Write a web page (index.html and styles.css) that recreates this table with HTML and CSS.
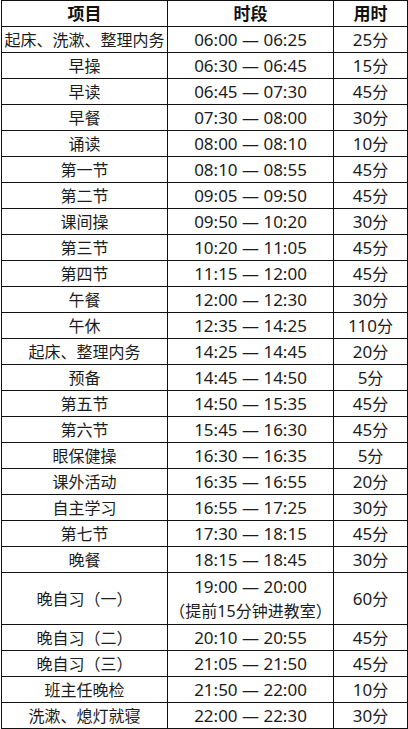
FILE: index.html
```html
<!DOCTYPE html>
<html lang="zh-CN">
<head>
<meta charset="utf-8">
<link rel="stylesheet" href="styles.css">
</head>
<body>
<table class="schedule">
  <colgroup><col class="c1"><col class="c2"><col class="c3"></colgroup>
  <thead>
    <tr><th>项目</th><th>时段</th><th>用时</th></tr>
  </thead>
  <tbody>
    <tr><td>起床、洗漱、整理内务</td><td class="num">06:00 — 06:25</td><td><span class="num">25</span>分</td></tr>
    <tr><td>早操</td><td class="num">06:30 — 06:45</td><td><span class="num">15</span>分</td></tr>
    <tr><td>早读</td><td class="num">06:45 — 07:30</td><td><span class="num">45</span>分</td></tr>
    <tr><td>早餐</td><td class="num">07:30 — 08:00</td><td><span class="num">30</span>分</td></tr>
    <tr><td>诵读</td><td class="num">08:00 — 08:10</td><td><span class="num">10</span>分</td></tr>
    <tr><td>第一节</td><td class="num">08:10 — 08:55</td><td><span class="num">45</span>分</td></tr>
    <tr><td>第二节</td><td class="num">09:05 — 09:50</td><td><span class="num">45</span>分</td></tr>
    <tr><td>课间操</td><td class="num">09:50 — 10:20</td><td><span class="num">30</span>分</td></tr>
    <tr><td>第三节</td><td class="num">10:20 — 11:05</td><td><span class="num">45</span>分</td></tr>
    <tr><td>第四节</td><td class="num">11:15 — 12:00</td><td><span class="num">45</span>分</td></tr>
    <tr><td>午餐</td><td class="num">12:00 — 12:30</td><td><span class="num">30</span>分</td></tr>
    <tr><td>午休</td><td class="num">12:35 — 14:25</td><td><span class="num">110</span>分</td></tr>
    <tr><td>起床、整理内务</td><td class="num">14:25 — 14:45</td><td><span class="num">20</span>分</td></tr>
    <tr><td>预备</td><td class="num">14:45 — 14:50</td><td><span class="num">5</span>分</td></tr>
    <tr><td>第五节</td><td class="num">14:50 — 15:35</td><td><span class="num">45</span>分</td></tr>
    <tr><td>第六节</td><td class="num">15:45 — 16:30</td><td><span class="num">45</span>分</td></tr>
    <tr><td>眼保健操</td><td class="num">16:30 — 16:35</td><td><span class="num">5</span>分</td></tr>
    <tr><td>课外活动</td><td class="num">16:35 — 16:55</td><td><span class="num">20</span>分</td></tr>
    <tr><td>自主学习</td><td class="num">16:55 — 17:25</td><td><span class="num">30</span>分</td></tr>
    <tr><td>第七节</td><td class="num">17:30 — 18:15</td><td><span class="num">45</span>分</td></tr>
    <tr><td>晚餐</td><td class="num">18:15 — 18:45</td><td><span class="num">30</span>分</td></tr>
    <tr class="tall"><td>晚自习（一）</td><td><span class="num">19:00 — 20:00</span><br>（提前15分钟进教室）</td><td><span class="num">60</span>分</td></tr>
    <tr><td>晚自习（二）</td><td class="num">20:10 — 20:55</td><td><span class="num">45</span>分</td></tr>
    <tr><td>晚自习（三）</td><td class="num">21:05 — 21:50</td><td><span class="num">45</span>分</td></tr>
    <tr><td>班主任晚检</td><td class="num">21:50 — 22:00</td><td><span class="num">10</span>分</td></tr>
    <tr><td>洗漱、熄灯就寝</td><td class="num">22:00 — 22:30</td><td><span class="num">30</span>分</td></tr>
  </tbody>
</table>
</body>
</html>
```
FILE: styles.css
```css
html, body {
  margin: 0;
  padding: 0;
  background: #ffffff;
}
.schedule {
  border-collapse: collapse;
  table-layout: fixed;
  width: 407px;
  margin: 0 0 0 1px;
  font-family: "Noto Sans", "Noto Sans CJK SC", sans-serif;
  font-size: 16px;
  color: #1c1c1c;
}
.c1 { width: 166px; }
.c2 { width: 166px; }
.c3 { width: 74px; }
.schedule th,
.schedule td {
  border: 1px solid #111111;
  padding: 0;
  height: 25px;
  line-height: 18px;
  text-align: center;
  vertical-align: middle;
  white-space: nowrap;
  overflow: hidden;
}
.schedule th {
  font-weight: bold;
  font-size: 17px;
  color: #111111;
}
.schedule .num {
  font-size: 17px;
  line-height: 18px;
}
.schedule tr.tall td {
  height: 51px;
  line-height: 24px;
}
.schedule tr.tall .num {
  line-height: 24px;
}
```
